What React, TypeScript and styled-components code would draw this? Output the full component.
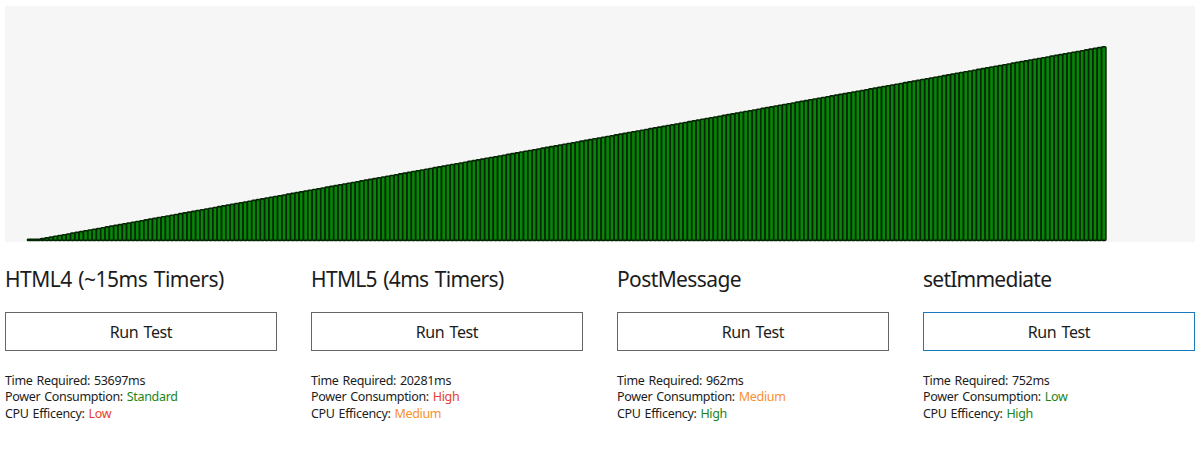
import React from "react";
import styled, { createGlobalStyle } from "styled-components";

const GlobalStyle = createGlobalStyle`
  body {
    margin: 0;
    background: #fff;
    color: #1c1c1c;
    font-family: "Noto Sans", "Open Sans", sans-serif;
  }
`;

const Page = styled.main`
  box-sizing: border-box;
  width: 1200px;
  height: 455px;
  padding: 6px 5px 0;
`;

const ChartPanel = styled.section`
  height: 236px;
  background: #f6f6f6;
`;

const Chart = styled.svg`
  display: block;
  width: 1190px;
  height: 236px;
`;

const Tests = styled.section`
  display: grid;
  grid-template-columns: repeat(4, 272px);
  column-gap: 34px;
`;

const Test = styled.article`
  display: flex;
  flex-direction: column;
`;

const Title = styled.h2<{ $spacing: number }>`
  margin: 21px 0 17px;
  height: 32px;
  line-height: 32px;
  font-size: 21px;
  font-weight: 400;
  letter-spacing: ${(p) => p.$spacing}px;
  word-spacing: 1.5px;
  white-space: nowrap;
`;

const RunButton = styled.button<{ $active: boolean }>`
  box-sizing: border-box;
  width: 272px;
  height: 39px;
  padding: 1px 0 0;
  border: 1px solid ${(p) => (p.$active ? "#1979bd" : "#666")};
  background: #fff;
  color: #1c1c1c;
  font: 400 16px/36px "Noto Sans", "Open Sans", sans-serif;
  letter-spacing: -0.4px;
  word-spacing: 1.5px;
`;

const Results = styled.div`
  margin-top: 22px;
  font-size: 12.5px;
  line-height: 16.25px;
  letter-spacing: -0.33px;
  word-spacing: 1px;
  white-space: nowrap;
`;

const tones = { good: "#1b841b", medium: "#f98f2c", bad: "#e8412c" };
type Tone = keyof typeof tones;

const Rating = styled.span<{ $tone: Tone }>`
  color: ${(p) => tones[p.$tone]};
`;

interface TestCase {
  title: string;
  spacing: number;
  time: string;
  power: [string, Tone];
  cpu: [string, Tone];
  active?: boolean;
}

const tests: TestCase[] = [
  { title: "HTML4 (~15ms Timers)", spacing: -0.5, time: "53697ms", power: ["Standard", "good"], cpu: ["Low", "bad"] },
  { title: "HTML5 (4ms Timers)", spacing: -0.68, time: "20281ms", power: ["High", "bad"], cpu: ["Medium", "medium"] },
  { title: "PostMessage", spacing: -0.6, time: "962ms", power: ["Medium", "medium"], cpu: ["High", "good"] },
  { title: "setImmediate", spacing: -0.75, time: "752ms", power: ["Low", "good"], cpu: ["High", "good"], active: true },
];

const BAR_COUNT = 250;
const PITCH = 4.314;
const BASELINE = 234.4;
const bars = Array.from({ length: BAR_COUNT }, (_, i) => ({
  x: 22.4 + i * PITCH,
  height: 1 + Math.max(0, ((i - 2) * 192.6) / (BAR_COUNT - 3)),
}));

export default function App() {
  return (
    <>
      <GlobalStyle />
      <Page>
        <ChartPanel>
          <Chart viewBox="0 0 1190 236" aria-hidden="true">
            {bars.map((bar, i) => (
              <rect
                key={i}
                x={bar.x}
                y={BASELINE - bar.height}
                width={PITCH}
                height={bar.height}
                rx={0.9}
                fill="#088408"
                stroke="#042604"
                strokeWidth={1.6}
              />
            ))}
          </Chart>
        </ChartPanel>
        <Tests>
          {tests.map((t) => (
            <Test key={t.title}>
              <Title $spacing={t.spacing}>{t.title}</Title>
              <RunButton $active={!!t.active}>Run Test</RunButton>
              <Results>
                <div>Time Required: {t.time}</div>
                <div>
                  Power Consumption: <Rating $tone={t.power[1]}>{t.power[0]}</Rating>
                </div>
                <div>
                  CPU Efficency: <Rating $tone={t.cpu[1]}>{t.cpu[0]}</Rating>
                </div>
              </Results>
            </Test>
          ))}
        </Tests>
      </Page>
    </>
  );
}
